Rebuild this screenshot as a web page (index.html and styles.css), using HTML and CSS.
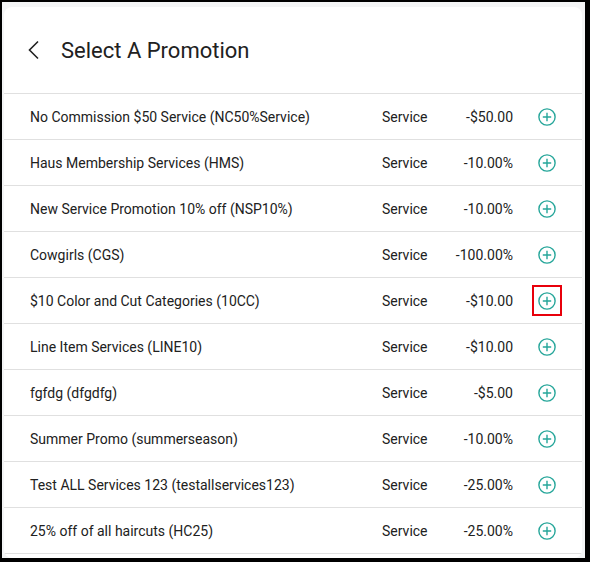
FILE: index.html
```html
<!DOCTYPE html>
<html>
<head>
<meta charset="utf-8">
<link rel="stylesheet" href="styles.css">
</head>
<body>
<div class="frame">
  <div class="card">
    <div class="header">
      <svg class="back" width="14" height="20" viewBox="0 0 14 20"><path d="M11 1.5 L2.5 10 L11 18.5" fill="none" stroke="#212121" stroke-width="1.6"/></svg>
      <h1 class="title">Select A Promotion</h1>
    </div>
    <div class="list">
      <div class="row"><span class="name">No Commission $50 Service (NC50%Service)</span><span class="type">Service</span><span class="amt">-$50.00</span><span class="add"><svg width="18" height="18" viewBox="0 0 18 18"><circle cx="9" cy="9" r="8.1"/><path d="M9 4.8V13.2M4.8 9H13.2"/></svg></span></div>
      <div class="row"><span class="name">Haus Membership Services (HMS)</span><span class="type">Service</span><span class="amt">-10.00%</span><span class="add"><svg width="18" height="18" viewBox="0 0 18 18"><circle cx="9" cy="9" r="8.1"/><path d="M9 4.8V13.2M4.8 9H13.2"/></svg></span></div>
      <div class="row"><span class="name">New Service Promotion 10% off (NSP10%)</span><span class="type">Service</span><span class="amt">-10.00%</span><span class="add"><svg width="18" height="18" viewBox="0 0 18 18"><circle cx="9" cy="9" r="8.1"/><path d="M9 4.8V13.2M4.8 9H13.2"/></svg></span></div>
      <div class="row"><span class="name">Cowgirls (CGS)</span><span class="type">Service</span><span class="amt">-100.00%</span><span class="add"><svg width="18" height="18" viewBox="0 0 18 18"><circle cx="9" cy="9" r="8.1"/><path d="M9 4.8V13.2M4.8 9H13.2"/></svg></span></div>
      <div class="row"><span class="name">$10 Color and Cut Categories (10CC)</span><span class="type">Service</span><span class="amt">-$10.00</span><span class="add selected"><svg width="18" height="18" viewBox="0 0 18 18"><circle cx="9" cy="9" r="8.1"/><path d="M9 4.8V13.2M4.8 9H13.2"/></svg></span></div>
      <div class="row"><span class="name">Line Item Services (LINE10)</span><span class="type">Service</span><span class="amt">-$10.00</span><span class="add"><svg width="18" height="18" viewBox="0 0 18 18"><circle cx="9" cy="9" r="8.1"/><path d="M9 4.8V13.2M4.8 9H13.2"/></svg></span></div>
      <div class="row"><span class="name">fgfdg (dfgdfg)</span><span class="type">Service</span><span class="amt">-$5.00</span><span class="add"><svg width="18" height="18" viewBox="0 0 18 18"><circle cx="9" cy="9" r="8.1"/><path d="M9 4.8V13.2M4.8 9H13.2"/></svg></span></div>
      <div class="row"><span class="name">Summer Promo (summerseason)</span><span class="type">Service</span><span class="amt">-10.00%</span><span class="add"><svg width="18" height="18" viewBox="0 0 18 18"><circle cx="9" cy="9" r="8.1"/><path d="M9 4.8V13.2M4.8 9H13.2"/></svg></span></div>
      <div class="row"><span class="name">Test ALL Services 123 (testallservices123)</span><span class="type">Service</span><span class="amt">-25.00%</span><span class="add"><svg width="18" height="18" viewBox="0 0 18 18"><circle cx="9" cy="9" r="8.1"/><path d="M9 4.8V13.2M4.8 9H13.2"/></svg></span></div>
      <div class="row"><span class="name">25% off of all haircuts (HC25)</span><span class="type">Service</span><span class="amt">-25.00%</span><span class="add"><svg width="18" height="18" viewBox="0 0 18 18"><circle cx="9" cy="9" r="8.1"/><path d="M9 4.8V13.2M4.8 9H13.2"/></svg></span></div>
    </div>
  </div>
</div>
</body>
</html>
```

FILE: styles.css
```css
html, body {
  margin: 0;
  padding: 0;
  background: #000;
  width: 590px;
  height: 562px;
  overflow: hidden;
}
.frame {
  margin: 2px 5px 0 2px;
  height: 556px;
  box-sizing: border-box;
  background: #f4f5f6;
  padding: 5px 3px 0 2px;
  overflow: hidden;
}
.card {
  background: #fff;
  height: 551px;
  border-radius: 8px;
  overflow: hidden;
  font-family: Roboto, "Liberation Sans", sans-serif;
  color: #212121;
}
.header {
  height: 86px;
  display: flex;
  align-items: center;
  padding-left: 23px;
  border-bottom: 1px solid #e0e0e0;
}
.back {
  display: block;
  margin-right: 20px;
}
.title {
  margin: 0;
  font-size: 22px;
  font-weight: 400;
  color: #212121;
}
.row {
  height: 45px;
  display: grid;
  grid-template-columns: minmax(0, 1fr) 70px 61px 49px;
  align-items: center;
  padding: 0 20px 0 26px;
  border-bottom: 1px solid #e0e0e0;
  font-size: 14px;
}
.amt {
  text-align: right;
}
.add {
  justify-self: end;
  width: 30px;
  height: 31px;
  box-sizing: border-box;
  display: flex;
  align-items: center;
  justify-content: center;
}
.add svg {
  display: block;
  fill: none;
  stroke: #26a69a;
  stroke-width: 1.4;
}
.add.selected {
  border: 2px solid #e8000b;
}
```
